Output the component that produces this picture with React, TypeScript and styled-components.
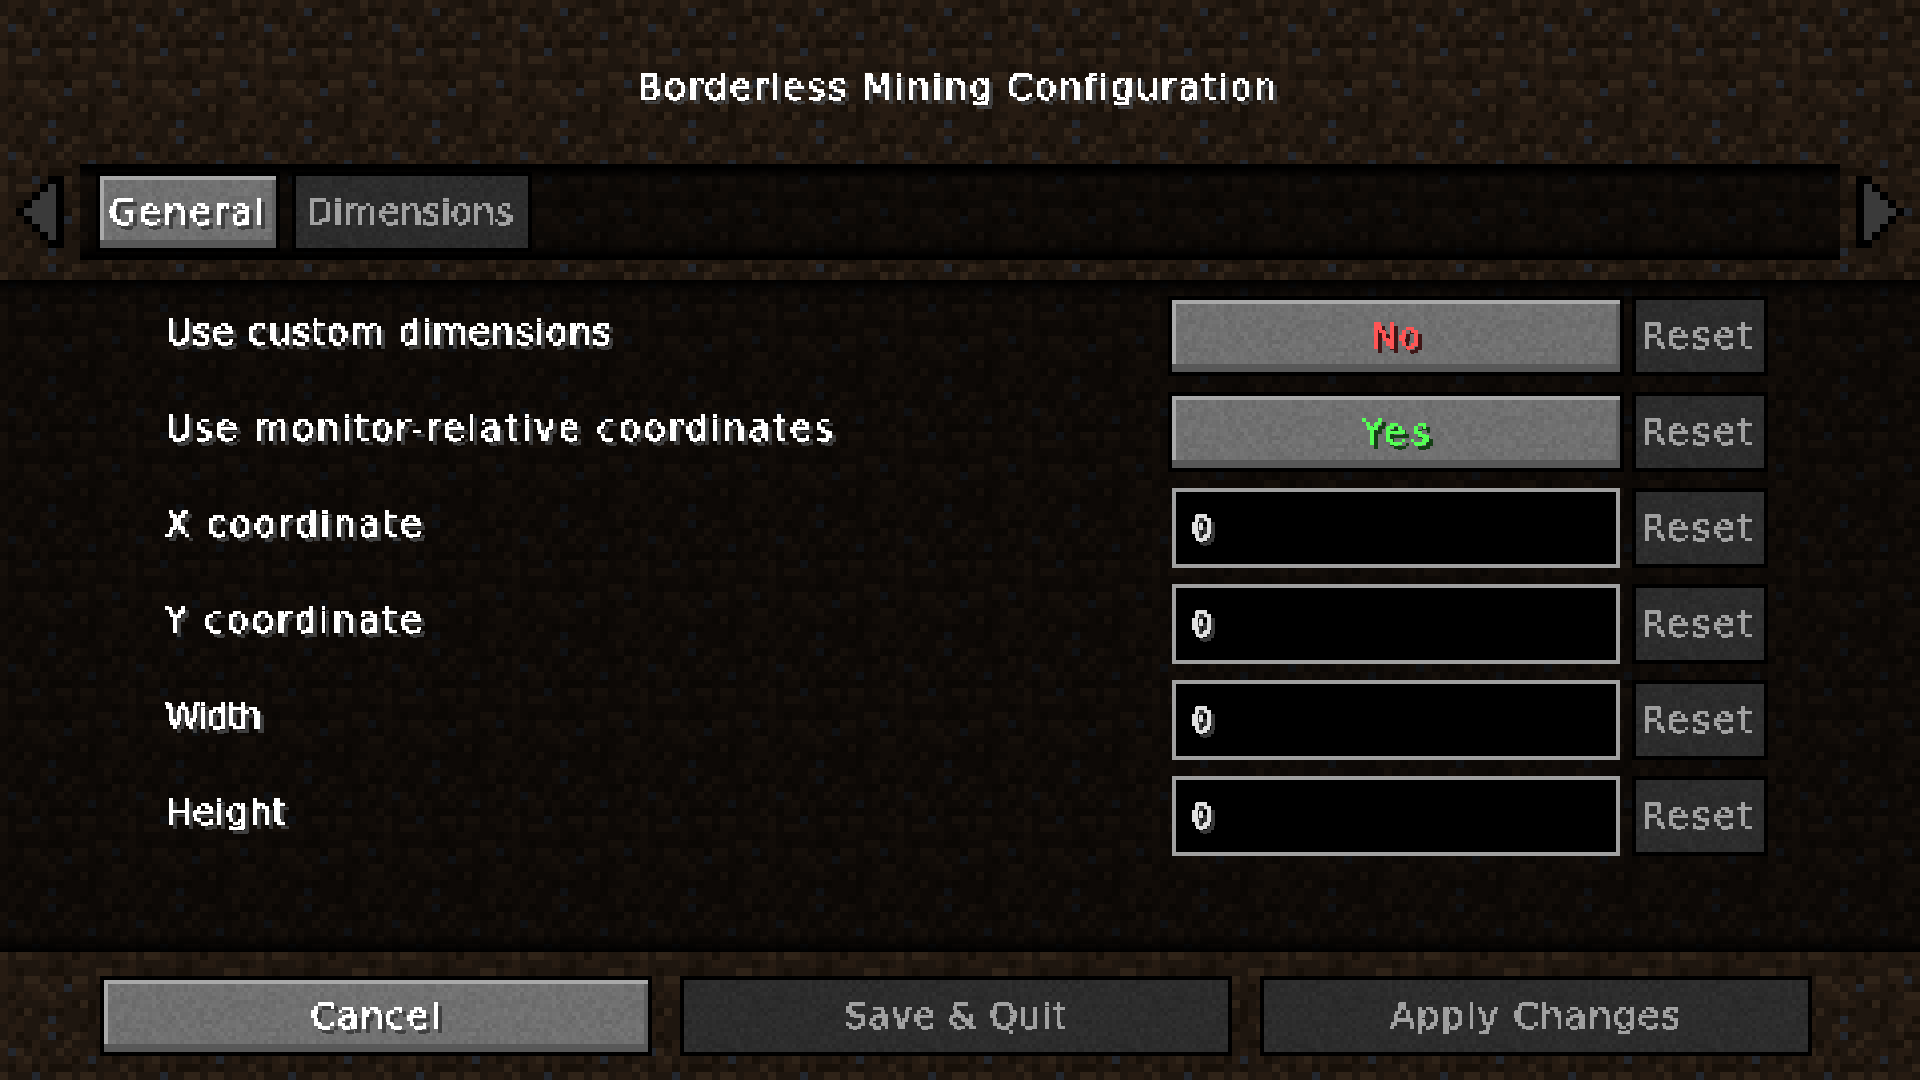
import React from "react";
import styled, { createGlobalStyle } from "styled-components";

/* ---------- textures ---------- */
const DIRT_PALETTE = ["#171009", "#1e160f", "#261b12", "#2f2318", "#23272e"];
const DIRT_ROWS = [
  "1221132211011312",
  "1201124013211200",
  "3110211131110031",
  "2431201312121221",
  "2123121120241201",
  "1022020001101113",
  "3111411331331221",
  "3133221120221122",
  "2111121012211101",
  "2101110011113312",
  "2213312203312241",
  "2112231242210210",
  "1021223111111133",
  "1211112210301222",
  "2103101011101122",
  "2121114111102220",
];

const svgUri = (w: number, h: number, vw: number, vh: number, body: string) =>
  `url("data:image/svg+xml,${encodeURIComponent(
    `<svg xmlns='http://www.w3.org/2000/svg' width='${w}' height='${h}' viewBox='0 0 ${vw} ${vh}' shape-rendering='crispEdges'>${body}</svg>`
  )}")`;

const dirtBody = DIRT_ROWS.map((row, y) =>
  row
    .split("")
    .map((c, x) => `<rect x='${x}' y='${y}' width='1' height='1' fill='${DIRT_PALETTE[+c]}'/>`)
    .join("")
).join("");
const DIRT = svgUri(128, 128, 16, 16, dirtBody);

function stoneTile(base: number, amp: number) {
  let seed = 1337 + base;
  const rnd = () => {
    seed = (seed * 16807) % 2147483647;
    return seed / 2147483647;
  };
  const cols = 50;
  const rows = 20;
  let out = "";
  for (let y = 0; y < rows; y++) {
    for (let x = 0; x < cols; x++) {
      const v = Math.round(base + (rnd() + rnd() - 1) * amp);
      out += `<rect x='${x}' y='${y}' width='1' height='1' fill='rgb(${v},${v},${v})'/>`;
    }
  }
  return svgUri(cols * 4, rows * 4, cols, rows, out);
}
const STONE_ON = stoneTile(112, 9);
const STONE_OFF = stoneTile(44, 6);

/* ---------- text fitting ---------- */
const FONT_SIZE = 36;
let measureCtx: CanvasRenderingContext2D | null = null;
function spacingFor(text: string, target: number, family: string) {
  if (!measureCtx) measureCtx = document.createElement("canvas").getContext("2d");
  if (!measureCtx || text.length < 2) return 0;
  measureCtx.font = `${FONT_SIZE}px ${family}`;
  return (target - measureCtx.measureText(text).width) / (text.length - 1);
}

const Global = createGlobalStyle`
  html, body { margin: 0; padding: 0; background: #000; }
  body { width: 1920px; height: 1080px; overflow: hidden; }
`;

const SANS = '"DejaVu Sans", sans-serif';
const MONO = '"DejaVu Sans Mono", monospace';

const Glyphs = styled.span<{ $color: string; $shadow?: string; $family: string }>`
  display: inline-block;
  font-family: ${(p) => p.$family};
  font-size: ${FONT_SIZE}px;
  line-height: 44px;
  height: 44px;
  white-space: pre;
  color: ${(p) => p.$color};
  filter: url(#mc-pixel) ${(p) => (p.$shadow ? `drop-shadow(4px 4px 0 ${p.$shadow})` : "")};
`;

function McText({
  children,
  width,
  color = "#ffffff",
  shadow = "#3f3f3f",
  family = SANS,
}: {
  children: string;
  width: number;
  color?: string;
  shadow?: string;
  family?: string;
}) {
  const ls = spacingFor(children, width, family);
  return (
    <Glyphs $color={color} $shadow={shadow || undefined} $family={family} style={{ letterSpacing: `${ls}px` }}>
      {children}
    </Glyphs>
  );
}

/* ---------- layout ---------- */
const Page = styled.div`
  width: 1920px;
  height: 1080px;
  display: flex;
  flex-direction: column;
  background-image: ${DIRT};
  background-size: 128px 128px;
  overflow: hidden;
`;

const TitleBar = styled.header`
  height: 164px;
  padding: 10px 4px 0 0;
  box-sizing: border-box;
  display: flex;
  align-items: center;
  justify-content: center;
`;

const TabRow = styled.nav`
  height: 96px;
  margin-bottom: 20px;
  padding: 0 16px;
  display: flex;
  align-items: center;
  gap: 16px;
`;

const TabBar = styled.div`
  flex: 1;
  height: 96px;
  box-sizing: border-box;
  padding: 8px 16px;
  display: flex;
  gap: 12px;
  background:
    linear-gradient(#000 0, #000 4px, transparent 16px),
    linear-gradient(0deg, #000 0, #000 4px, transparent 16px),
    rgba(0, 0, 0, 0.58);
`;

const ArrowSvg = styled.svg`
  display: block;
  width: 48px;
  height: 72px;
  flex: none;
`;

const Widget = styled.button<{ $on: boolean }>`
  display: flex;
  align-items: center;
  justify-content: center;
  margin: 0;
  padding: 0;
  box-sizing: border-box;
  height: 80px;
  border: 4px solid #000;
  background-image: ${(p) => (p.$on ? STONE_ON : STONE_OFF)};
  box-shadow: ${(p) =>
    p.$on ? "inset 0 -8px 0 #585858, inset 4px 4px 0 #a9a9a9, inset -4px 0 0 #5e5e5e" : "none"};
`;

const Tab = styled(Widget)<{ $w: number; $pad?: number }>`
  width: ${(p) => p.$w}px;
  padding-right: ${(p) => p.$pad ?? 0}px;
`;

const List = styled.main`
  flex: 1;
  box-sizing: border-box;
  padding: 16px 152px 0 165px;
  display: flex;
  flex-direction: column;
  gap: 16px;
  background:
    linear-gradient(#000 0, transparent 16px),
    linear-gradient(0deg, #000 0, transparent 16px),
    rgba(0, 0, 0, 0.55);
`;

const Row = styled.div`
  height: 80px;
  display: flex;
  align-items: center;
  gap: 8px;
`;

const Label = styled.div`
  flex: 1;
  margin-top: -8px;
`;

const Toggle = styled(Widget)<{ $pad?: number }>`
  width: 456px;
  padding-left: ${(p) => p.$pad ?? 0}px;
`;

const ResetButton = styled(Widget)`
  width: 136px;
  padding-right: 5px;
`;

const FieldWrap = styled.div`
  width: 456px;
  height: 80px;
  padding: 0 4px;
  box-sizing: border-box;
`;

const Field = styled.div`
  height: 80px;
  box-sizing: border-box;
  border: 4px solid #a0a0a0;
  background: #000;
  padding-left: 15px;
  display: flex;
  align-items: center;
`;

const Footer = styled.footer`
  height: 128px;
  box-sizing: border-box;
  padding: 24px 0 0 100px;
  display: flex;
  gap: 28px;
`;

const FooterButton = styled(Widget)`
  width: 552px;
`;

const FilterHost = styled.svg`
  position: absolute;
  width: 0;
  height: 0;
`;

/* ---------- parts ---------- */
function Arrow({ dir }: { dir: "left" | "right" }) {
  const black: [number, number][] = [
    [0, 0], [0, 1], [0, 2], [0, 3], [0, 4], [0, 5], [0, 6], [0, 7], [0, 8],
    [1, 0], [1, 8], [2, 1], [2, 7], [3, 2], [3, 6], [4, 3], [4, 5], [5, 4],
  ];
  const fill: [number, number, number][] = [
    [1, 1, 7],
    [2, 2, 5],
    [3, 3, 3],
    [4, 4, 1],
  ];
  return (
    <ArrowSvg viewBox="0 0 6 9" shapeRendering="crispEdges">
      <g transform={dir === "left" ? "translate(6 0) scale(-1 1)" : undefined}>
        {black.map(([x, y]) => (
          <rect key={`${x}-${y}`} x={x} y={y} width="1" height="1" fill="#000" />
        ))}
        {fill.map(([x, y, h]) => (
          <rect key={x} x={x} y={y} width="1" height={h} fill="#3a3a3a" />
        ))}
      </g>
    </ArrowSvg>
  );
}

const Reset = () => (
  <ResetButton $on={false}>
    <McText width={111} color="#a0a0a0" shadow="">
      Reset
    </McText>
  </ResetButton>
);

const NumberRow = ({ label, width }: { label: string; width: number }) => (
  <Row>
    <Label>
      <McText width={width}>{label}</McText>
    </Label>
    <FieldWrap>
      <Field>
        <McText width={22} color="#e0e0e0" shadow="#383838" family={MONO}>
          0
        </McText>
      </Field>
    </FieldWrap>
    <Reset />
  </Row>
);

export default function App() {
  return (
    <Page>
      <Global />
      <FilterHost aria-hidden="true">
        <filter
          id="mc-pixel"
          x="-2%"
          y="-2%"
          width="104%"
          height="104%"
          colorInterpolationFilters="sRGB"
        >
          <feFlood x="1" y="1" width="2" height="2" floodColor="#fff" />
          <feComposite width="4" height="4" />
          <feTile result="grid" />
          <feComposite in="SourceGraphic" in2="grid" operator="in" />
          <feComponentTransfer>
            <feFuncA type="discrete" tableValues="0 1 1 1" />
          </feComponentTransfer>
          <feMorphology operator="dilate" radius="1" />
        </filter>
      </FilterHost>

      <TitleBar>
        <McText width={640}>Borderless Mining Configuration</McText>
      </TitleBar>

      <TabRow>
        <Arrow dir="left" />
        <TabBar>
          <Tab $on $w={184}>
            <McText width={156}>General</McText>
          </Tab>
          <Tab $on={false} $w={240} $pad={5}>
            <McText width={208} color="#a0a0a0" shadow="">
              Dimensions
            </McText>
          </Tab>
        </TabBar>
        <Arrow dir="right" />
      </TabRow>

      <List>
        <Row>
          <Label>
            <McText width={446}>Use custom dimensions</McText>
          </Label>
          <Toggle $on>
            <McText width={50} color="#ff5555" shadow="#3f1515">
              No
            </McText>
          </Toggle>
          <Reset />
        </Row>
        <Row>
          <Label>
            <McText width={668}>Use monitor-relative coordinates</McText>
          </Label>
          <Toggle $on $pad={4}>
            <McText width={68} color="#55ff55" shadow="#153f15">
              Yes
            </McText>
          </Toggle>
          <Reset />
        </Row>
        <NumberRow label="X coordinate" width={257} />
        <NumberRow label="Y coordinate" width={257} />
        <NumberRow label="Width" width={97} />
        <NumberRow label="Height" width={121} />
      </List>

      <Footer>
        <FooterButton $on>
          <McText width={130}>Cancel</McText>
        </FooterButton>
        <FooterButton $on={false}>
          <McText width={222} color="#a0a0a0" shadow="">
            Save &amp; Quit
          </McText>
        </FooterButton>
        <FooterButton $on={false}>
          <McText width={290} color="#a0a0a0" shadow="">
            Apply Changes
          </McText>
        </FooterButton>
      </Footer>
    </Page>
  );
}
